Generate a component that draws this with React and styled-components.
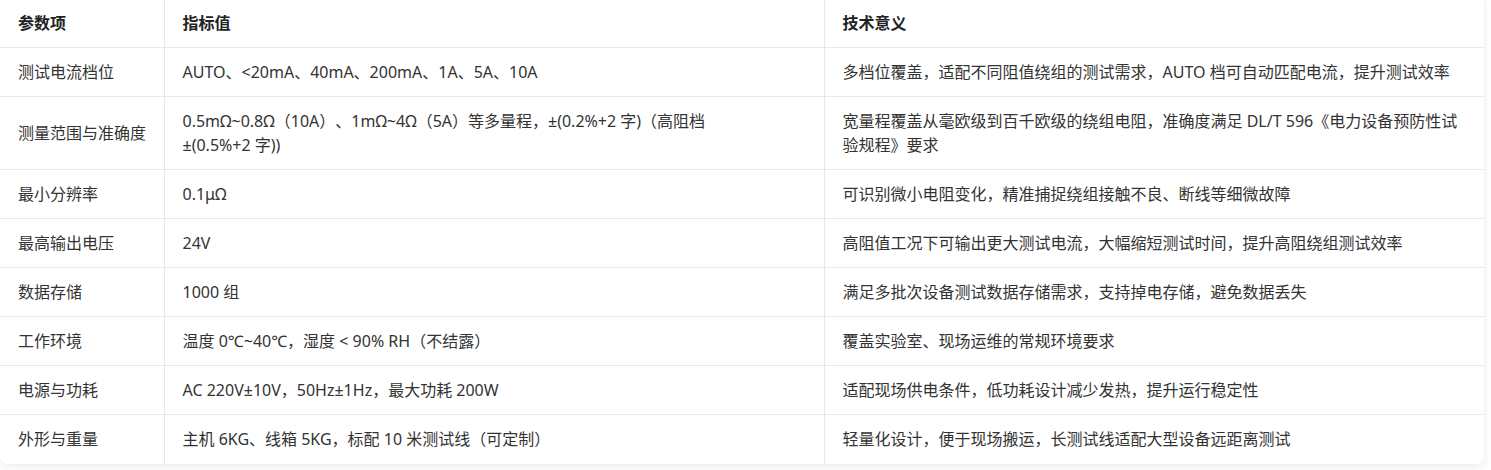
import React from "react";
import styled, { createGlobalStyle } from "styled-components";

const Global = createGlobalStyle`
  html, body { margin: 0; padding: 0; background: #ffffff; }
  body {
    font-family: "Noto Sans", "Noto Sans CJK SC", sans-serif;
    -webkit-font-smoothing: antialiased;
    text-spacing-trim: space-all;
  }
`;

const Page = styled.div`
  width: 1491px;
  padding-bottom: 7px;
`;

const Card = styled.div`
  width: 1484px;
  background: #fff;
  border-radius: 0 0 8px 8px;
  box-shadow: 0 2px 10px rgba(0, 0, 0, 0.09);
  overflow: hidden;
`;

const Table = styled.table`
  width: 100%;
  border-collapse: collapse;
  table-layout: fixed;
  font-size: 16px;
  line-height: 24px;
  color: #333;
  text-spacing-trim: space-all;
`;

const Col = styled.col`
  width: ${(p) => p.$w}px;
`;

const HeadCell = styled.th`
  text-align: left;
  font-weight: 700;
  color: #222;
  padding: 11px 18px 12px;
  border-bottom: 1px solid #e8e8e8;
  border-right: 1px solid #e8e8e8;
  &:last-child { border-right: none; }
`;

const Row = styled.tr`
  &:last-child td { border-bottom: none; padding-bottom: 13px; }
`;

const Cell = styled.td`
  padding: 12px 18px;
  vertical-align: middle;
  border-bottom: 1px solid #e8e8e8;
  border-right: 1px solid #e8e8e8;
  white-space: ${(p) => (p.$label ? "nowrap" : "normal")};
  &:last-child { border-right: none; }
`;

const Keep = styled.span`
  white-space: nowrap;
`;

const rows = [
  ["测试电流档位", "AUTO、<20mA、40mA、200mA、1A、5A、10A", "多档位覆盖，适配不同阻值绕组的测试需求，AUTO 档可自动匹配电流，提升测试效率"],
  [
    "测量范围与准确度",
    <>
      0.5mΩ~0.8Ω（10A）、1mΩ~4Ω（5A）等多量程，±(0.2%+2 字)（高阻档 <Keep>±(0.5%+2 字))</Keep>
    </>,
    "宽量程覆盖从毫欧级到百千欧级的绕组电阻，准确度满足 DL/T 596《电力设备预防性试验规程》要求",
  ],
  ["最小分辨率", "0.1μΩ", "可识别微小电阻变化，精准捕捉绕组接触不良、断线等细微故障"],
  ["最高输出电压", "24V", "高阻值工况下可输出更大测试电流，大幅缩短测试时间，提升高阻绕组测试效率"],
  ["数据存储", "1000 组", "满足多批次设备测试数据存储需求，支持掉电存储，避免数据丢失"],
  ["工作环境", "温度 0℃~40℃，湿度 < 90% RH（不结露）", "覆盖实验室、现场运维的常规环境要求"],
  ["电源与功耗", "AC 220V±10V，50Hz±1Hz，最大功耗 200W", "适配现场供电条件，低功耗设计减少发热，提升运行稳定性"],
  ["外形与重量", "主机 6KG、线箱 5KG，标配 10 米测试线（可定制）", "轻量化设计，便于现场搬运，长测试线适配大型设备远距离测试"],
];

export default function App() {
  return (
    <Page>
      <Global />
      <Card>
        <Table>
          <colgroup>
            <Col $w={164} />
            <Col $w={660} />
            <Col $w={660} />
          </colgroup>
          <thead>
            <tr>
              <HeadCell>参数项</HeadCell>
              <HeadCell>指标值</HeadCell>
              <HeadCell>技术意义</HeadCell>
            </tr>
          </thead>
          <tbody>
            {rows.map((r) => (
              <Row key={r[0]}>
                <Cell $label>{r[0]}</Cell>
                <Cell>{r[1]}</Cell>
                <Cell>{r[2]}</Cell>
              </Row>
            ))}
          </tbody>
        </Table>
      </Card>
    </Page>
  );
}
